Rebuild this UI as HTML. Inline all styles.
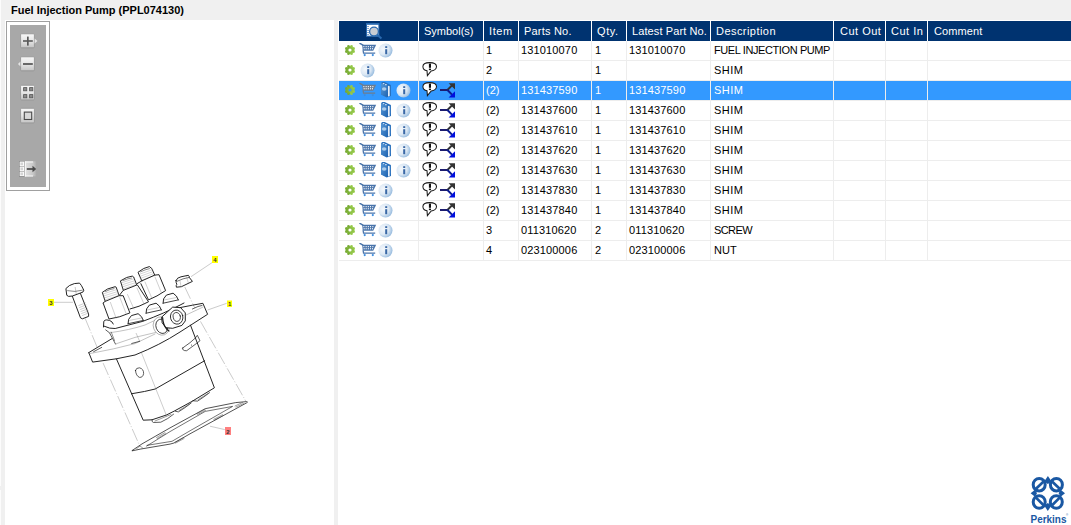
<!DOCTYPE html><html><head><meta charset="utf-8"><style>
*{margin:0;padding:0;box-sizing:border-box}
html,body{width:1071px;height:525px;overflow:hidden;background:#f0f0f0;font-family:"Liberation Sans",sans-serif;position:relative}
.a{position:absolute}
.ic{position:absolute;display:block}
.t{position:absolute;font-size:11px;line-height:13px;white-space:nowrap;color:#000}
.h{position:absolute;font-size:11px;line-height:13px;white-space:nowrap;color:#fff}
</style></head><body>
<svg width="0" height="0" style="position:absolute"><defs><radialGradient id="ig" cx="35%" cy="40%" r="70%"><stop offset="0" stop-color="#f4f8fc"/><stop offset=".55" stop-color="#dce8f4"/><stop offset="1" stop-color="#8fb6dc"/></radialGradient><linearGradient id="gg" x1="0" y1="0" x2="0" y2="1"><stop offset="0" stop-color="#98cc4c"/><stop offset="1" stop-color="#74a830"/></linearGradient><linearGradient id="bk" x1="0" y1="0" x2="1" y2="1"><stop offset="0" stop-color="#5a9ad6"/><stop offset="1" stop-color="#1d62b0"/></linearGradient></defs></svg>
<div class="a" style="left:0;top:0;width:1px;height:525px;background:#fcfcfc"></div>
<div class="a" style="left:0;top:486px;width:1px;height:4px;background:#f0f0f0"></div>
<div class="a" style="left:11px;top:3px;font-size:11px;font-weight:bold;line-height:14px;color:#000">Fuel Injection Pump (PPL074130)</div>
<div class="a" style="left:5px;top:20px;width:329px;height:505px;background:#fff"></div>
<div class="a" style="left:338px;top:20px;width:733px;height:505px;background:#fff"></div>

<div class="a" style="left:6px;top:21px;width:44px;height:170px;border:1px solid #a0a0a0;background:#fff"></div>
<div class="a" style="left:10px;top:25px;width:36px;height:162px;background:#a8a8a8"></div>
<svg class="ic" style="left:0;top:0" width="60" height="200" viewBox="0 0 60 200">
<defs><linearGradient id="bg1" x1="0" y1="0" x2="0" y2="1"><stop offset="0" stop-color="#f8f8f8"/><stop offset=".5" stop-color="#e6e6e6"/><stop offset="1" stop-color="#c4c4c4"/></linearGradient></defs>
<g stroke="#909090" stroke-width=".8" fill="url(#bg1)">
<rect x="20.6" y="33.8" width="13.8" height="14" rx="1"/>
<rect x="20.6" y="56.8" width="13.8" height="14" rx="1"/>
<rect x="20.6" y="85.3" width="13.8" height="14.6" rx="1"/>
<rect x="20.6" y="108.3" width="13.8" height="14.6" rx="1"/>
</g>
<path d="M34.6 38.5 L37.5 41 L34.6 43.5 Z" fill="#e4e4e4"/>
<path d="M20.4 61.5 L18 64 L20.4 66.5 Z" fill="#e4e4e4"/>
<g fill="#5a5a5a">
<rect x="23" y="40.2" width="9.8" height="1.6"/><rect x="27" y="36.6" width="1.7" height="9"/>
<rect x="23" y="63.1" width="9.8" height="1.8"/>
</g>
<g fill="#8a8a8a" stroke="#555" stroke-width=".8">
<rect x="23.6" y="87.6" width="3.2" height="3.2"/><rect x="29.6" y="87.6" width="3.2" height="3.2"/>
<rect x="23.6" y="94.6" width="3.2" height="3.2"/><rect x="29.6" y="94.6" width="3.2" height="3.2"/>
</g>
<rect x="24.3" y="112.1" width="7.4" height="7.4" fill="#d8d8d8" stroke="#4a4a4a" stroke-width="1.1"/>
<rect x="19" y="161" width="5.6" height="15.6" fill="#7a7a7a"/>
<g fill="#d4d4d4" stroke="#fafafa" stroke-width="1">
<rect x="20.1" y="162" width="3.4" height="3.6"/><rect x="20.1" y="167" width="3.4" height="3.6"/><rect x="20.1" y="172" width="3.4" height="3.6"/>
</g>
<defs><linearGradient id="bg2" x1="0" y1="0" x2="1" y2="0"><stop offset="0" stop-color="#e4e4e4"/><stop offset=".7" stop-color="#c8c8c8"/><stop offset="1" stop-color="#a8a8a8"/></linearGradient></defs>
<rect x="24.6" y="161.3" width="12" height="15" fill="url(#bg2)"/>
<path d="M25.3 161.5 V176.5 M25 162 H33 M25 176 H33" stroke="#fafafa" stroke-width="1"/>
<path d="M26.8 169 H33" stroke="#4a4a4a" stroke-width="1.7"/><path d="M32.5 165.8 L36.2 169 L32.5 172.2 Z" fill="#4a4a4a"/>
</svg>

<svg class="ic" style="left:0;top:0" width="335" height="525" viewBox="0 0 335 525">
<g fill="none" stroke="#a8a8a8" stroke-width=".6">
<path d="M54 302.3 H73"/>
<path d="M191 276.7 L212.4 262.4"/>
<path d="M207.6 310 L226.7 303.3"/>
<path d="M210 426.2 L224.8 429.6"/>
<path d="M136 333 L139.5 341 M141.5 352.8 L166.4 415.4" stroke="#9a9a9a" stroke-width=".5"/>
<path d="M85.2 318.5 L97.4 347.9 M103.1 363.1 L140 446.5" stroke-dasharray="13 2 1 2"/>
<path d="M184.8 287 L194.8 308.1 M200.5 321.4 L246 401.5" stroke-dasharray="13 2 1 2"/>
</g>
<g fill="none" stroke="#181818" stroke-width=".95" stroke-linejoin="round" stroke-linecap="round">
<!-- bolt -->
<path d="M66.2 288.3 L69.5 285.5 L74.3 283.6 L79.5 283.1 L81.4 285.5 L83.8 290.2 L82.9 292.1 L72.4 296 L68.6 296.4 L67.1 295.5 Z"/>
<path d="M67.6 290.7 Q75 292.5 82.4 290.2" stroke-width=".5"/>
<path d="M75.2 287.4 L76.2 293.6" stroke-width=".4" stroke="#777"/>
<path d="M72.4 296.4 L80.5 317.9 L82.4 318.8 L88.6 316.4 L88.6 314 L80.5 293.6"/>
<g stroke-width=".4" stroke="#888"><path d="M78.8 305.5 L85.2 303 M79.5 307.5 L86 305 M80.2 309.5 L86.8 307 M80.9 311.5 L87.5 309 M81.6 313.5 L88.2 311 M82.3 315.5 L88.5 313"/></g>
<!-- nut -->
<path d="M176 280.5 Q177 277.5 181 276.8 L188.3 275.3 Q189.5 276 189.2 277.3 L192.4 281.4 L181.4 286.7 L176.4 287.2 Q175.8 285.5 176.8 284.3 Q175.8 282.5 176 280.5 Z"/>
<path d="M177 281.3 Q183 278.3 189.2 277.4" stroke-width=".6"/>
<path d="M186.5 276.8 L188.3 282.6 M180 281 L181 286" stroke-width=".4" stroke="#888"/>
<!-- injector 1 -->
<path d="M105.1 301 L102.3 292.4 L107.5 289 L115.1 286.7 L116.1 287.1 L119 295.2"/>
<path d="M105.5 291.5 Q110 289 114 288.6" stroke-width=".5"/>
<g stroke-width=".35" stroke="#888"><path d="M103 294 L117 289.5 M103.6 296 L117.7 291.5 M104.2 298 L118.3 293.5 M104.8 300 L118.8 295.5"/></g>
<path d="M103.2 302.9 L105.1 301.4 L119 295.7 L123.2 295.7 L129.9 312.9 Q120 317.5 109 319 L103.2 303.3"/>
<path d="M110.4 302.4 L116.1 318.1 M119.9 297.6 L126.6 314.8" stroke-width=".4" stroke="#888"/>
<!-- injector 2 -->
<path d="M123.2 289.9 L120.4 280.9 L126.6 277.5 L132.3 276.1 L133.7 277 L136.6 284.7"/>
<path d="M123 280.5 Q128 278.5 131.5 278" stroke-width=".5"/>
<g stroke-width=".35" stroke="#888"><path d="M121 283 L134.6 278.5 M121.6 285 L135.3 280.5 M122.2 287 L135.9 282.5 M122.8 289 L136.4 284.5"/></g>
<path d="M119.9 294.7 L123.2 290.4 L136.6 285.1 L137.5 285.1 L148.5 301.8 Q139 307 130 309"/>
<path d="M127.5 294.5 L134 309 M137 288 L144 304" stroke-width=".4" stroke="#888"/>
<!-- injector 3 -->
<path d="M141.8 280.9 L138 272.3 L143.7 268.5 L149.4 266.6 L151.8 268.5 L154.7 275.1"/>
<path d="M140.6 271.8 Q145 269.6 149.5 268.6" stroke-width=".5"/>
<g stroke-width=".35" stroke="#888"><path d="M138.8 274.5 L152.7 269.5 M139.5 276.5 L153.4 271.5 M140.2 278.5 L154 273.5 M140.9 280.5 L154.6 275.5"/></g>
<path d="M137 283.7 L141.8 280.9 L154.7 275.1 L159 274.7 L165.6 290.6 Q157 296.5 148.5 299.9 L140.9 283.7"/>
<path d="M145 282 L152 298.5 M155 277 L161.5 293" stroke-width=".4" stroke="#888"/>
<!-- bosses -->
<path d="M103.5 327 L103.8 321.3 Q105 319.8 106.7 319.9 L109.5 320.4 Q112.5 321.5 113.3 324"/>
<path d="M128.1 323.7 L128.6 319.4 L131.4 315.6 L138.1 313.7 L141.4 316.6 L143.3 320.4"/>
<path d="M146.1 313.2 L146.6 308.9 L149.4 305.1 L156.1 303.2 L159.4 306.1 L161.3 309.9"/>
<path d="M163.1 303.2 L163.6 298.9 L166.4 295.1 L173.1 293.2 L176.4 296.1 L178.3 299.9"/>
<path d="M128.1 323.7 L143.3 320.4 M146.1 313.2 L161.3 309.9 M163.1 303.2 L178.3 299.9" stroke-width=".8"/>
<path d="M129 320.5 L142.5 317.8 M147 310 L160.5 307.3 M164 300 L177.5 297.3" stroke-width=".4" stroke="#888"/>
<!-- head plate -->
<path d="M103.8 326.1 Q110 329 115.2 328.5 L142.9 321.3 Q165 313 180 305.1 L184 303"/>
<path d="M105.7 329.9 L109.5 332.8 L115.5 344" stroke-width=".7"/>
<path d="M109.5 332.8 Q130 330 145 325 L162 317" stroke-width=".45" stroke="#777"/>
<path d="M115.5 344 L135 337.4 L156 332.4" stroke-width=".45" stroke="#777"/>
<path d="M111.2 332.1 L114.5 340.5" stroke-width=".5"/>
<!-- fitting -->
<ellipse cx="161.3" cy="326" rx="8" ry="9.3" transform="rotate(-20 161.3 326)" stroke-width=".45" stroke="#666" fill="#fff"/>
<ellipse cx="161.8" cy="326.3" rx="5.8" ry="7.3" transform="rotate(-20 161.8 326.3)" stroke-width=".75"/>
<path d="M161.9 316.9 L172.7 307.1 L180.7 307.7 L185.3 312.9 L185.3 320.9 L181.9 325.4 L172.7 328.3 L165.9 327.7 L162.4 323.1 Z" fill="#fff"/>
<path d="M162.6 317.5 Q163 325 167 329.5 L169 331" stroke-width="1.2"/>
<ellipse cx="176.7" cy="317.1" rx="6.2" ry="7.1" transform="rotate(-15 176.7 317.1)" stroke-width=".8"/>
<ellipse cx="176.8" cy="316.9" rx="3.6" ry="4.5" transform="rotate(-15 176.8 316.9)" stroke-width=".7"/>
<!-- main flange -->
<path d="M88.8 352.6 L111.7 338.8"/>
<path d="M88.8 352.6 L92.6 362.1 L116.4 358.8 L135 355 Q160 345 180 332 L207.6 314.3 L202.9 303.3 L192.4 305.2 L180 307.6"/>
<path d="M89.8 353.6 Q115 349 135 343.6 L155 334" stroke-width=".45" stroke="#777"/>
<path d="M185.7 315.2 L202.9 307.1" stroke-width=".45" stroke="#777"/>
<path d="M93.6 351.7 L101.7 347.4 M131.7 343.5 L139.7 341.3 M192.4 309 L198 306.5 L202 305.5" stroke-width=".7"/>
<!-- body -->
<path d="M116.4 358.8 L143.2 420.2 L152 419.8 L166.4 415 L174.4 411 L192 401.4 L214.4 387.8 L190.5 325.2"/>
<path d="M131.4 393.8 Q146 391.5 155.2 389 L204.7 360.7"/>
<path d="M152 419.8 Q151.8 422.4 153.5 422.5 L160.8 422.2 Q168 419 173.6 414.2 M175.2 411.2 L178.4 411.9 Q185 408 191.2 403 M192.8 400.8 L197.6 401.1 Q204 397 209.6 392.6" stroke-width=".7"/>
<path d="M155 421 L171 414.5 M179 410.5 L189.5 404 M198 399.7 L208 393.5" stroke-width=".5" stroke="#333"/>
<path d="M135.5 370.5 Q136 367.6 139.5 367.8 Q143.8 369 143.6 373.5 Q143 377.6 139.5 377.4 Q136 376 135.5 370.5 Z" stroke-width=".7"/>
<path d="M182.7 348 L190 342.7 L195.3 338 L197.3 335.3 L200 340.7 L196.7 343.3 L186.7 350.7 Q182 351 182.7 348 Z" stroke-width=".7"/>
<circle cx="191.5" cy="345" r=".5" fill="#333" stroke="none"/>
<!-- gasket -->
<path d="M132.3 450.4 L142 443.9 L170 427.9 L205.2 408.7 L235.7 402.6 L246.7 401.6 Q248.3 402 246.7 402.8 L190 433.8 L174 443 L170 444.1 L140.9 449 L132.3 450.8 Z" stroke-width=".75"/>
<path d="M146.6 446.1 L170 431.6 L205.2 411.4 L232.6 406.4 L190 430.8 L172 441.3 L147.1 445.3" stroke-width=".6"/>
<g stroke-width=".5" stroke="#444"><path d="M156.5 437.5 L165 432.6 M157.2 438.6 L165.7 433.7 M197 413.6 L205 409.4 M197.6 414.5 L205.6 410.3 M175 442.2 L183.5 437.6 M175.6 443.1 L184.1 438.5 M213.8 419.3 L222.5 414.7 M214.4 420.2 L223.1 415.6 M235 406 L242.5 402.5 M236 407 L243.5 403.5 M136.5 448.8 L140 446 L142.5 447.8"/></g>
</g>
<g>
<rect x="48" y="299" width="6" height="7" fill="#ffff00"/>
<rect x="212" y="256" width="6" height="7" fill="#ffff00"/>
<rect x="227" y="300.5" width="5" height="6.5" fill="#ffff00"/>
<rect x="225" y="427" width="6" height="8" fill="#ff8080"/>
<g font-family="Liberation Sans" font-size="6" font-weight="bold" fill="#333">
<text x="49.3" y="305">3</text><text x="213.3" y="262">4</text><text x="228" y="306">1</text><text x="226.3" y="434">2</text>
</g>
</g>
</svg>

<svg class="ic" style="left:1020px;top:470px" width="51" height="55" viewBox="1020 470 51 55">
<g fill="none" stroke="#1a58a3" stroke-width="3">
<ellipse cx="1039.2" cy="484.7" rx="6" ry="6.3"/>
<ellipse cx="1056.4" cy="484.7" rx="6" ry="6.3"/>
<ellipse cx="1039.2" cy="502" rx="6" ry="6.3"/>
<ellipse cx="1056.3" cy="502" rx="6" ry="6.3"/>
<path d="M1036 488.8 L1044.4 480.8 M1051.3 480.8 L1059.7 488.8 M1036 497.6 L1044.6 506.2 M1051.1 506.2 L1059.7 497.6" stroke-width="2.7"/>
</g>
<g fill="#1a58a3">
<path d="M1044.2 481.5 L1047.9 476 L1051.6 481.5 L1047.9 484 Z"/>
<path d="M1044.2 505.5 L1047.8 511 L1051.4 505.5 L1047.8 503 Z"/>
<path d="M1035 489.8 L1030.6 493.3 L1035 496.8 L1037 493.3 Z"/>
<path d="M1060.6 489.8 L1065 493.3 L1060.6 496.8 L1058.6 493.3 Z"/>
</g>
<text x="1030.5" y="522.8" font-family="Liberation Sans" font-weight="bold" font-size="11.5" fill="#1a58a3" textLength="36" lengthAdjust="spacingAndGlyphs">Perkins</text>
<text x="1066" y="516" font-family="Liberation Sans" font-size="3" fill="#1a58a3">®</text>
</svg>

<div class="a" style="left:339px;top:21px;width:732px;height:20px;background:#003370"></div>
<div class="a" style="left:418px;top:21px;width:1px;height:20px;background:#fff"></div>
<div class="a" style="left:483px;top:21px;width:1px;height:20px;background:#fff"></div>
<div class="a" style="left:518px;top:21px;width:1px;height:20px;background:#fff"></div>
<div class="a" style="left:591px;top:21px;width:1px;height:20px;background:#fff"></div>
<div class="a" style="left:626px;top:21px;width:1px;height:20px;background:#fff"></div>
<div class="a" style="left:710px;top:21px;width:1px;height:20px;background:#fff"></div>
<div class="a" style="left:833px;top:21px;width:1px;height:20px;background:#fff"></div>
<div class="a" style="left:885px;top:21px;width:1px;height:20px;background:#fff"></div>
<div class="a" style="left:927px;top:21px;width:1px;height:20px;background:#fff"></div>
<div class="h" style="left:424px;top:25px;letter-spacing:0px">Symbol(s)</div>
<div class="h" style="left:489px;top:25px;letter-spacing:0.6px">Item</div>
<div class="h" style="left:524px;top:25px;letter-spacing:0.2px">Parts No.</div>
<div class="h" style="left:597px;top:25px;letter-spacing:0.6px">Qty.</div>
<div class="h" style="left:632px;top:25px;letter-spacing:0.1px">Latest Part No.</div>
<div class="h" style="left:716px;top:25px;letter-spacing:0.45px">Description</div>
<div class="h" style="left:840px;top:25px;letter-spacing:0.5px">Cut Out</div>
<div class="h" style="left:891px;top:25px;letter-spacing:0.5px">Cut In</div>
<div class="h" style="left:934px;top:25px;letter-spacing:0.1px">Comment</div>
<svg class="ic" style="left:365px;top:22px" width="18" height="18" viewBox="0 0 18 18"><rect x="1.5" y="1.6" width="12.4" height="12.6" fill="#fff" stroke="#2a6ab0" stroke-width="1"/><rect x="1.2" y="1.2" width="13" height="1.6" fill="#2a6ab0"/><path d="M2.3 4.5 H3.8 M2.3 6.5 H3.8 M2.3 8.5 H3.8 M2.3 10.5 H3.8 M2.3 12.5 H3.8" stroke="#4a80c0" stroke-width=".9"/><circle cx="9" cy="9.6" r="4.4" fill="#c9cdd3" stroke="#2a6ab0" stroke-width="1.3"/><path d="M12.2 12.8 L16.4 16.6" stroke="#2a6ab0" stroke-width="2"/></svg>
<div class="a" style="left:339px;top:60px;width:732px;height:1px;background:#ededed"></div>
<div class="a" style="left:339px;top:80px;width:732px;height:1px;background:#ededed"></div>
<div class="a" style="left:339px;top:81px;width:732px;height:19px;background:#3399ff"></div>
<div class="a" style="left:339px;top:100px;width:732px;height:1px;background:#ededed"></div>
<div class="a" style="left:339px;top:120px;width:732px;height:1px;background:#ededed"></div>
<div class="a" style="left:339px;top:140px;width:732px;height:1px;background:#ededed"></div>
<div class="a" style="left:339px;top:160px;width:732px;height:1px;background:#ededed"></div>
<div class="a" style="left:339px;top:180px;width:732px;height:1px;background:#ededed"></div>
<div class="a" style="left:339px;top:200px;width:732px;height:1px;background:#ededed"></div>
<div class="a" style="left:339px;top:220px;width:732px;height:1px;background:#ededed"></div>
<div class="a" style="left:339px;top:240px;width:732px;height:1px;background:#ededed"></div>
<div class="a" style="left:339px;top:260px;width:732px;height:1px;background:#ededed"></div>
<div class="a" style="left:418px;top:41px;width:1px;height:220px;background:#ededed"></div>
<div class="a" style="left:483px;top:41px;width:1px;height:220px;background:#ededed"></div>
<div class="a" style="left:518px;top:41px;width:1px;height:220px;background:#ededed"></div>
<div class="a" style="left:591px;top:41px;width:1px;height:220px;background:#ededed"></div>
<div class="a" style="left:626px;top:41px;width:1px;height:220px;background:#ededed"></div>
<div class="a" style="left:710px;top:41px;width:1px;height:220px;background:#ededed"></div>
<div class="a" style="left:833px;top:41px;width:1px;height:220px;background:#ededed"></div>
<div class="a" style="left:885px;top:41px;width:1px;height:220px;background:#ededed"></div>
<div class="a" style="left:927px;top:41px;width:1px;height:220px;background:#ededed"></div>
<svg class="ic" style="left:344px;top:44px" width="12" height="12" viewBox="0 0 12 12"><defs></defs><g transform="translate(6 6) rotate(22.5)" fill="url(#gg)"><circle r="3.7"/><rect x="-1.25" y="-5.1" width="2.5" height="10.2" rx=".5"/><rect x="-1.25" y="-5.1" width="2.5" height="10.2" rx=".5" transform="rotate(45)"/><rect x="-1.25" y="-5.1" width="2.5" height="10.2" rx=".5" transform="rotate(90)"/><rect x="-1.25" y="-5.1" width="2.5" height="10.2" rx=".5" transform="rotate(135)"/></g><circle cx="6" cy="6" r="1.6" fill="#fff"/></svg>
<svg class="ic" style="left:359px;top:43px" width="18" height="15" viewBox="0 0 18 15"><path d="M1 0.4 L3.9 2.2" stroke="#4a74aa" stroke-width="1.5" stroke-linecap="round"/><path d="M3.2 1.7 L17.2 1.7 L14.2 7.8 L3.7 7.8 Z" fill="#4a74aa"/><path d="M4.1 7.5 L4.6 10.4 M3.9 10.2 L16.2 10.2" stroke="#4a74aa" stroke-width="1.3"/><g fill="#fff"><rect x="4.3" y="3.1" width="1.1" height="1.1"/><rect x="6.6" y="3.1" width="1.1" height="1.1"/><rect x="8.8" y="3.1" width="1.1" height="1.1"/><rect x="11" y="3.1" width="1.1" height="1.1"/><rect x="13.3" y="3.1" width="1.1" height="1.1"/><rect x="4.6" y="5.2" width="1.1" height="1.1"/><rect x="6.6" y="5.2" width="1.1" height="1.1"/><rect x="8.8" y="5.2" width="1.1" height="1.1"/><rect x="11" y="5.2" width="1.1" height="1.1"/><rect x="13" y="5.2" width="1" height="1.1"/></g><g fill="#3d8ee0"><circle cx="5.7" cy="12.1" r="1.1"/><circle cx="13.8" cy="12.1" r="1.1"/></g></svg>
<svg class="ic" style="left:378px;top:43px" width="15" height="15" viewBox="0 0 15 15"><defs></defs><circle cx="7.5" cy="7.5" r="7" fill="url(#ig)"/><rect x="7.2" y="3.2" width="2" height="1.8" fill="#3a68a6"/><rect x="7.2" y="6.2" width="2" height="5" fill="#3a68a6"/></svg>
<div class="t" style="left:486px;top:44px;color:#000;letter-spacing:0px">1</div>
<div class="t" style="left:521px;top:44px;color:#000;letter-spacing:0.15px">131010070</div>
<div class="t" style="left:595px;top:44px;color:#000;letter-spacing:0px">1</div>
<div class="t" style="left:629px;top:44px;color:#000;letter-spacing:0.15px">131010070</div>
<div class="t" style="left:714px;top:44px;color:#000;letter-spacing:-0.4px">FUEL INJECTION PUMP</div>
<svg class="ic" style="left:344px;top:64px" width="12" height="12" viewBox="0 0 12 12"><defs></defs><g transform="translate(6 6) rotate(22.5)" fill="url(#gg)"><circle r="3.7"/><rect x="-1.25" y="-5.1" width="2.5" height="10.2" rx=".5"/><rect x="-1.25" y="-5.1" width="2.5" height="10.2" rx=".5" transform="rotate(45)"/><rect x="-1.25" y="-5.1" width="2.5" height="10.2" rx=".5" transform="rotate(90)"/><rect x="-1.25" y="-5.1" width="2.5" height="10.2" rx=".5" transform="rotate(135)"/></g><circle cx="6" cy="6" r="1.6" fill="#fff"/></svg>
<svg class="ic" style="left:360px;top:63px" width="15" height="15" viewBox="0 0 15 15"><defs></defs><circle cx="7.5" cy="7.5" r="7" fill="url(#ig)"/><rect x="7.2" y="3.2" width="2" height="1.8" fill="#3a68a6"/><rect x="7.2" y="6.2" width="2" height="5" fill="#3a68a6"/></svg>
<svg class="ic" style="left:422px;top:61px" width="16" height="17" viewBox="0 0 16 17"><path d="M5 9.8 C2 9.3 0.9 7.6 0.9 5.6 C0.9 3 3.6 1.6 7.6 1.6 C11.6 1.6 14.5 3 14.5 5.6 C14.5 8.1 11.8 9.7 9.2 9.9 L5.4 14.6 Z" fill="#fff" stroke="#1a1a1a" stroke-width="1.05"/><rect x="6.9" y="2.6" width="2.1" height="4.2" fill="#111"/><rect x="6.9" y="7.6" width="2.1" height="1.5" fill="#111"/></svg>
<div class="t" style="left:486px;top:64px;color:#000;letter-spacing:0px">2</div>
<div class="t" style="left:595px;top:64px;color:#000;letter-spacing:0px">1</div>
<div class="t" style="left:714px;top:64px;color:#000;letter-spacing:0.45px">SHIM</div>
<svg class="ic" style="left:344px;top:84px" width="12" height="12" viewBox="0 0 12 12"><defs></defs><g transform="translate(6 6) rotate(22.5)" fill="url(#gg)"><circle r="3.7"/><rect x="-1.25" y="-5.1" width="2.5" height="10.2" rx=".5"/><rect x="-1.25" y="-5.1" width="2.5" height="10.2" rx=".5" transform="rotate(45)"/><rect x="-1.25" y="-5.1" width="2.5" height="10.2" rx=".5" transform="rotate(90)"/><rect x="-1.25" y="-5.1" width="2.5" height="10.2" rx=".5" transform="rotate(135)"/></g><circle cx="6" cy="6" r="1.6" fill="#3399ff"/></svg>
<svg class="ic" style="left:359px;top:83px" width="18" height="15" viewBox="0 0 18 15"><path d="M1 0.4 L3.9 2.2" stroke="#6d7d90" stroke-width="1.5" stroke-linecap="round"/><path d="M3.2 1.7 L17.2 1.7 L14.2 7.8 L3.7 7.8 Z" fill="#6d7d90"/><path d="M4.1 7.5 L4.6 10.4 M3.9 10.2 L16.2 10.2" stroke="#6d7d90" stroke-width="1.3"/><g fill="#fff"><rect x="4.3" y="3.1" width="1.1" height="1.1"/><rect x="6.6" y="3.1" width="1.1" height="1.1"/><rect x="8.8" y="3.1" width="1.1" height="1.1"/><rect x="11" y="3.1" width="1.1" height="1.1"/><rect x="13.3" y="3.1" width="1.1" height="1.1"/><rect x="4.6" y="5.2" width="1.1" height="1.1"/><rect x="6.6" y="5.2" width="1.1" height="1.1"/><rect x="8.8" y="5.2" width="1.1" height="1.1"/><rect x="11" y="5.2" width="1.1" height="1.1"/><rect x="13" y="5.2" width="1" height="1.1"/></g><g fill="#3d8ee0"><circle cx="5.7" cy="12.1" r="1.1"/><circle cx="13.8" cy="12.1" r="1.1"/></g></svg>
<svg class="ic" style="left:380px;top:81px" width="12" height="18" viewBox="0 0 12 18"><path d="M1.1 2 L2.4 0.9 L4.7 0.9 L10.9 4 L11 15 L6.6 16.6 L1.1 13.6 Z" fill="#2870bd"/><path d="M1.1 2.2 L8 5 L8 16 L1.1 13.4 Z" fill="url(#bk)"/><path d="M8.1 4.8 L9.6 5.3 L9.6 15.1 L8.1 15.5 Z" fill="#fff"/><ellipse cx="4.2" cy="8" rx="2.3" ry="1.7" fill="#d0e4f6" opacity=".75"/><ellipse cx="3.6" cy="2.6" rx="1" ry=".6" fill="#e8f2fc" opacity=".9"/><ellipse cx="5.9" cy="3.7" rx="1" ry=".6" fill="#e8f2fc" opacity=".9"/></svg>
<svg class="ic" style="left:396px;top:83px" width="15" height="15" viewBox="0 0 15 15"><defs></defs><circle cx="7.5" cy="7.5" r="7" fill="url(#ig)"/><rect x="7.2" y="3.2" width="2" height="1.8" fill="#3a68a6"/><rect x="7.2" y="6.2" width="2" height="5" fill="#3a68a6"/></svg>
<svg class="ic" style="left:422px;top:81px" width="16" height="17" viewBox="0 0 16 17"><path d="M5 9.8 C2 9.3 0.9 7.6 0.9 5.6 C0.9 3 3.6 1.6 7.6 1.6 C11.6 1.6 14.5 3 14.5 5.6 C14.5 8.1 11.8 9.7 9.2 9.9 L5.4 14.6 Z" fill="#fff" stroke="#1a1a1a" stroke-width="1.05"/><rect x="6.9" y="2.6" width="2.1" height="4.2" fill="#111"/><rect x="6.9" y="7.6" width="2.1" height="1.5" fill="#111"/></svg>
<svg class="ic" style="left:439px;top:83px" width="17" height="16" viewBox="0 0 17 16"><path d="M1 7 L8.8 7" stroke="#1c1c70" stroke-width="2"/><path d="M8.2 7.2 L13 2.4" stroke="#333" stroke-width="2"/><path d="M8.2 6.8 L13 11.6" stroke="#0a1a90" stroke-width="2"/><path d="M9.6 0.2 L16 0.2 L16 6.6 Z" fill="#333"/><path d="M9.6 14.6 L16 14.6 L16 8.2 Z" fill="#0010dd"/></svg>
<div class="t" style="left:486px;top:84px;color:#fff;letter-spacing:0px">(2)</div>
<div class="t" style="left:521px;top:84px;color:#fff;letter-spacing:0.15px">131437590</div>
<div class="t" style="left:595px;top:84px;color:#fff;letter-spacing:0px">1</div>
<div class="t" style="left:629px;top:84px;color:#fff;letter-spacing:0.15px">131437590</div>
<div class="t" style="left:714px;top:84px;color:#fff;letter-spacing:0.45px">SHIM</div>
<svg class="ic" style="left:344px;top:104px" width="12" height="12" viewBox="0 0 12 12"><defs></defs><g transform="translate(6 6) rotate(22.5)" fill="url(#gg)"><circle r="3.7"/><rect x="-1.25" y="-5.1" width="2.5" height="10.2" rx=".5"/><rect x="-1.25" y="-5.1" width="2.5" height="10.2" rx=".5" transform="rotate(45)"/><rect x="-1.25" y="-5.1" width="2.5" height="10.2" rx=".5" transform="rotate(90)"/><rect x="-1.25" y="-5.1" width="2.5" height="10.2" rx=".5" transform="rotate(135)"/></g><circle cx="6" cy="6" r="1.6" fill="#fff"/></svg>
<svg class="ic" style="left:359px;top:103px" width="18" height="15" viewBox="0 0 18 15"><path d="M1 0.4 L3.9 2.2" stroke="#4a74aa" stroke-width="1.5" stroke-linecap="round"/><path d="M3.2 1.7 L17.2 1.7 L14.2 7.8 L3.7 7.8 Z" fill="#4a74aa"/><path d="M4.1 7.5 L4.6 10.4 M3.9 10.2 L16.2 10.2" stroke="#4a74aa" stroke-width="1.3"/><g fill="#fff"><rect x="4.3" y="3.1" width="1.1" height="1.1"/><rect x="6.6" y="3.1" width="1.1" height="1.1"/><rect x="8.8" y="3.1" width="1.1" height="1.1"/><rect x="11" y="3.1" width="1.1" height="1.1"/><rect x="13.3" y="3.1" width="1.1" height="1.1"/><rect x="4.6" y="5.2" width="1.1" height="1.1"/><rect x="6.6" y="5.2" width="1.1" height="1.1"/><rect x="8.8" y="5.2" width="1.1" height="1.1"/><rect x="11" y="5.2" width="1.1" height="1.1"/><rect x="13" y="5.2" width="1" height="1.1"/></g><g fill="#3d8ee0"><circle cx="5.7" cy="12.1" r="1.1"/><circle cx="13.8" cy="12.1" r="1.1"/></g></svg>
<svg class="ic" style="left:380px;top:101px" width="12" height="18" viewBox="0 0 12 18"><path d="M1.1 2 L2.4 0.9 L4.7 0.9 L10.9 4 L11 15 L6.6 16.6 L1.1 13.6 Z" fill="#2870bd"/><path d="M1.1 2.2 L8 5 L8 16 L1.1 13.4 Z" fill="url(#bk)"/><path d="M8.1 4.8 L9.6 5.3 L9.6 15.1 L8.1 15.5 Z" fill="#fff"/><ellipse cx="4.2" cy="8" rx="2.3" ry="1.7" fill="#d0e4f6" opacity=".75"/><ellipse cx="3.6" cy="2.6" rx="1" ry=".6" fill="#e8f2fc" opacity=".9"/><ellipse cx="5.9" cy="3.7" rx="1" ry=".6" fill="#e8f2fc" opacity=".9"/></svg>
<svg class="ic" style="left:396px;top:103px" width="15" height="15" viewBox="0 0 15 15"><defs></defs><circle cx="7.5" cy="7.5" r="7" fill="url(#ig)"/><rect x="7.2" y="3.2" width="2" height="1.8" fill="#3a68a6"/><rect x="7.2" y="6.2" width="2" height="5" fill="#3a68a6"/></svg>
<svg class="ic" style="left:422px;top:101px" width="16" height="17" viewBox="0 0 16 17"><path d="M5 9.8 C2 9.3 0.9 7.6 0.9 5.6 C0.9 3 3.6 1.6 7.6 1.6 C11.6 1.6 14.5 3 14.5 5.6 C14.5 8.1 11.8 9.7 9.2 9.9 L5.4 14.6 Z" fill="#fff" stroke="#1a1a1a" stroke-width="1.05"/><rect x="6.9" y="2.6" width="2.1" height="4.2" fill="#111"/><rect x="6.9" y="7.6" width="2.1" height="1.5" fill="#111"/></svg>
<svg class="ic" style="left:439px;top:103px" width="17" height="16" viewBox="0 0 17 16"><path d="M1 7 L8.8 7" stroke="#1c1c70" stroke-width="2"/><path d="M8.2 7.2 L13 2.4" stroke="#333" stroke-width="2"/><path d="M8.2 6.8 L13 11.6" stroke="#0a1a90" stroke-width="2"/><path d="M9.6 0.2 L16 0.2 L16 6.6 Z" fill="#333"/><path d="M9.6 14.6 L16 14.6 L16 8.2 Z" fill="#0010dd"/></svg>
<div class="t" style="left:486px;top:104px;color:#000;letter-spacing:0px">(2)</div>
<div class="t" style="left:521px;top:104px;color:#000;letter-spacing:0.15px">131437600</div>
<div class="t" style="left:595px;top:104px;color:#000;letter-spacing:0px">1</div>
<div class="t" style="left:629px;top:104px;color:#000;letter-spacing:0.15px">131437600</div>
<div class="t" style="left:714px;top:104px;color:#000;letter-spacing:0.45px">SHIM</div>
<svg class="ic" style="left:344px;top:124px" width="12" height="12" viewBox="0 0 12 12"><defs></defs><g transform="translate(6 6) rotate(22.5)" fill="url(#gg)"><circle r="3.7"/><rect x="-1.25" y="-5.1" width="2.5" height="10.2" rx=".5"/><rect x="-1.25" y="-5.1" width="2.5" height="10.2" rx=".5" transform="rotate(45)"/><rect x="-1.25" y="-5.1" width="2.5" height="10.2" rx=".5" transform="rotate(90)"/><rect x="-1.25" y="-5.1" width="2.5" height="10.2" rx=".5" transform="rotate(135)"/></g><circle cx="6" cy="6" r="1.6" fill="#fff"/></svg>
<svg class="ic" style="left:359px;top:123px" width="18" height="15" viewBox="0 0 18 15"><path d="M1 0.4 L3.9 2.2" stroke="#4a74aa" stroke-width="1.5" stroke-linecap="round"/><path d="M3.2 1.7 L17.2 1.7 L14.2 7.8 L3.7 7.8 Z" fill="#4a74aa"/><path d="M4.1 7.5 L4.6 10.4 M3.9 10.2 L16.2 10.2" stroke="#4a74aa" stroke-width="1.3"/><g fill="#fff"><rect x="4.3" y="3.1" width="1.1" height="1.1"/><rect x="6.6" y="3.1" width="1.1" height="1.1"/><rect x="8.8" y="3.1" width="1.1" height="1.1"/><rect x="11" y="3.1" width="1.1" height="1.1"/><rect x="13.3" y="3.1" width="1.1" height="1.1"/><rect x="4.6" y="5.2" width="1.1" height="1.1"/><rect x="6.6" y="5.2" width="1.1" height="1.1"/><rect x="8.8" y="5.2" width="1.1" height="1.1"/><rect x="11" y="5.2" width="1.1" height="1.1"/><rect x="13" y="5.2" width="1" height="1.1"/></g><g fill="#3d8ee0"><circle cx="5.7" cy="12.1" r="1.1"/><circle cx="13.8" cy="12.1" r="1.1"/></g></svg>
<svg class="ic" style="left:380px;top:121px" width="12" height="18" viewBox="0 0 12 18"><path d="M1.1 2 L2.4 0.9 L4.7 0.9 L10.9 4 L11 15 L6.6 16.6 L1.1 13.6 Z" fill="#2870bd"/><path d="M1.1 2.2 L8 5 L8 16 L1.1 13.4 Z" fill="url(#bk)"/><path d="M8.1 4.8 L9.6 5.3 L9.6 15.1 L8.1 15.5 Z" fill="#fff"/><ellipse cx="4.2" cy="8" rx="2.3" ry="1.7" fill="#d0e4f6" opacity=".75"/><ellipse cx="3.6" cy="2.6" rx="1" ry=".6" fill="#e8f2fc" opacity=".9"/><ellipse cx="5.9" cy="3.7" rx="1" ry=".6" fill="#e8f2fc" opacity=".9"/></svg>
<svg class="ic" style="left:396px;top:123px" width="15" height="15" viewBox="0 0 15 15"><defs></defs><circle cx="7.5" cy="7.5" r="7" fill="url(#ig)"/><rect x="7.2" y="3.2" width="2" height="1.8" fill="#3a68a6"/><rect x="7.2" y="6.2" width="2" height="5" fill="#3a68a6"/></svg>
<svg class="ic" style="left:422px;top:121px" width="16" height="17" viewBox="0 0 16 17"><path d="M5 9.8 C2 9.3 0.9 7.6 0.9 5.6 C0.9 3 3.6 1.6 7.6 1.6 C11.6 1.6 14.5 3 14.5 5.6 C14.5 8.1 11.8 9.7 9.2 9.9 L5.4 14.6 Z" fill="#fff" stroke="#1a1a1a" stroke-width="1.05"/><rect x="6.9" y="2.6" width="2.1" height="4.2" fill="#111"/><rect x="6.9" y="7.6" width="2.1" height="1.5" fill="#111"/></svg>
<svg class="ic" style="left:439px;top:123px" width="17" height="16" viewBox="0 0 17 16"><path d="M1 7 L8.8 7" stroke="#1c1c70" stroke-width="2"/><path d="M8.2 7.2 L13 2.4" stroke="#333" stroke-width="2"/><path d="M8.2 6.8 L13 11.6" stroke="#0a1a90" stroke-width="2"/><path d="M9.6 0.2 L16 0.2 L16 6.6 Z" fill="#333"/><path d="M9.6 14.6 L16 14.6 L16 8.2 Z" fill="#0010dd"/></svg>
<div class="t" style="left:486px;top:124px;color:#000;letter-spacing:0px">(2)</div>
<div class="t" style="left:521px;top:124px;color:#000;letter-spacing:0.15px">131437610</div>
<div class="t" style="left:595px;top:124px;color:#000;letter-spacing:0px">1</div>
<div class="t" style="left:629px;top:124px;color:#000;letter-spacing:0.15px">131437610</div>
<div class="t" style="left:714px;top:124px;color:#000;letter-spacing:0.45px">SHIM</div>
<svg class="ic" style="left:344px;top:144px" width="12" height="12" viewBox="0 0 12 12"><defs></defs><g transform="translate(6 6) rotate(22.5)" fill="url(#gg)"><circle r="3.7"/><rect x="-1.25" y="-5.1" width="2.5" height="10.2" rx=".5"/><rect x="-1.25" y="-5.1" width="2.5" height="10.2" rx=".5" transform="rotate(45)"/><rect x="-1.25" y="-5.1" width="2.5" height="10.2" rx=".5" transform="rotate(90)"/><rect x="-1.25" y="-5.1" width="2.5" height="10.2" rx=".5" transform="rotate(135)"/></g><circle cx="6" cy="6" r="1.6" fill="#fff"/></svg>
<svg class="ic" style="left:359px;top:143px" width="18" height="15" viewBox="0 0 18 15"><path d="M1 0.4 L3.9 2.2" stroke="#4a74aa" stroke-width="1.5" stroke-linecap="round"/><path d="M3.2 1.7 L17.2 1.7 L14.2 7.8 L3.7 7.8 Z" fill="#4a74aa"/><path d="M4.1 7.5 L4.6 10.4 M3.9 10.2 L16.2 10.2" stroke="#4a74aa" stroke-width="1.3"/><g fill="#fff"><rect x="4.3" y="3.1" width="1.1" height="1.1"/><rect x="6.6" y="3.1" width="1.1" height="1.1"/><rect x="8.8" y="3.1" width="1.1" height="1.1"/><rect x="11" y="3.1" width="1.1" height="1.1"/><rect x="13.3" y="3.1" width="1.1" height="1.1"/><rect x="4.6" y="5.2" width="1.1" height="1.1"/><rect x="6.6" y="5.2" width="1.1" height="1.1"/><rect x="8.8" y="5.2" width="1.1" height="1.1"/><rect x="11" y="5.2" width="1.1" height="1.1"/><rect x="13" y="5.2" width="1" height="1.1"/></g><g fill="#3d8ee0"><circle cx="5.7" cy="12.1" r="1.1"/><circle cx="13.8" cy="12.1" r="1.1"/></g></svg>
<svg class="ic" style="left:380px;top:141px" width="12" height="18" viewBox="0 0 12 18"><path d="M1.1 2 L2.4 0.9 L4.7 0.9 L10.9 4 L11 15 L6.6 16.6 L1.1 13.6 Z" fill="#2870bd"/><path d="M1.1 2.2 L8 5 L8 16 L1.1 13.4 Z" fill="url(#bk)"/><path d="M8.1 4.8 L9.6 5.3 L9.6 15.1 L8.1 15.5 Z" fill="#fff"/><ellipse cx="4.2" cy="8" rx="2.3" ry="1.7" fill="#d0e4f6" opacity=".75"/><ellipse cx="3.6" cy="2.6" rx="1" ry=".6" fill="#e8f2fc" opacity=".9"/><ellipse cx="5.9" cy="3.7" rx="1" ry=".6" fill="#e8f2fc" opacity=".9"/></svg>
<svg class="ic" style="left:396px;top:143px" width="15" height="15" viewBox="0 0 15 15"><defs></defs><circle cx="7.5" cy="7.5" r="7" fill="url(#ig)"/><rect x="7.2" y="3.2" width="2" height="1.8" fill="#3a68a6"/><rect x="7.2" y="6.2" width="2" height="5" fill="#3a68a6"/></svg>
<svg class="ic" style="left:422px;top:141px" width="16" height="17" viewBox="0 0 16 17"><path d="M5 9.8 C2 9.3 0.9 7.6 0.9 5.6 C0.9 3 3.6 1.6 7.6 1.6 C11.6 1.6 14.5 3 14.5 5.6 C14.5 8.1 11.8 9.7 9.2 9.9 L5.4 14.6 Z" fill="#fff" stroke="#1a1a1a" stroke-width="1.05"/><rect x="6.9" y="2.6" width="2.1" height="4.2" fill="#111"/><rect x="6.9" y="7.6" width="2.1" height="1.5" fill="#111"/></svg>
<svg class="ic" style="left:439px;top:143px" width="17" height="16" viewBox="0 0 17 16"><path d="M1 7 L8.8 7" stroke="#1c1c70" stroke-width="2"/><path d="M8.2 7.2 L13 2.4" stroke="#333" stroke-width="2"/><path d="M8.2 6.8 L13 11.6" stroke="#0a1a90" stroke-width="2"/><path d="M9.6 0.2 L16 0.2 L16 6.6 Z" fill="#333"/><path d="M9.6 14.6 L16 14.6 L16 8.2 Z" fill="#0010dd"/></svg>
<div class="t" style="left:486px;top:144px;color:#000;letter-spacing:0px">(2)</div>
<div class="t" style="left:521px;top:144px;color:#000;letter-spacing:0.15px">131437620</div>
<div class="t" style="left:595px;top:144px;color:#000;letter-spacing:0px">1</div>
<div class="t" style="left:629px;top:144px;color:#000;letter-spacing:0.15px">131437620</div>
<div class="t" style="left:714px;top:144px;color:#000;letter-spacing:0.45px">SHIM</div>
<svg class="ic" style="left:344px;top:164px" width="12" height="12" viewBox="0 0 12 12"><defs></defs><g transform="translate(6 6) rotate(22.5)" fill="url(#gg)"><circle r="3.7"/><rect x="-1.25" y="-5.1" width="2.5" height="10.2" rx=".5"/><rect x="-1.25" y="-5.1" width="2.5" height="10.2" rx=".5" transform="rotate(45)"/><rect x="-1.25" y="-5.1" width="2.5" height="10.2" rx=".5" transform="rotate(90)"/><rect x="-1.25" y="-5.1" width="2.5" height="10.2" rx=".5" transform="rotate(135)"/></g><circle cx="6" cy="6" r="1.6" fill="#fff"/></svg>
<svg class="ic" style="left:359px;top:163px" width="18" height="15" viewBox="0 0 18 15"><path d="M1 0.4 L3.9 2.2" stroke="#4a74aa" stroke-width="1.5" stroke-linecap="round"/><path d="M3.2 1.7 L17.2 1.7 L14.2 7.8 L3.7 7.8 Z" fill="#4a74aa"/><path d="M4.1 7.5 L4.6 10.4 M3.9 10.2 L16.2 10.2" stroke="#4a74aa" stroke-width="1.3"/><g fill="#fff"><rect x="4.3" y="3.1" width="1.1" height="1.1"/><rect x="6.6" y="3.1" width="1.1" height="1.1"/><rect x="8.8" y="3.1" width="1.1" height="1.1"/><rect x="11" y="3.1" width="1.1" height="1.1"/><rect x="13.3" y="3.1" width="1.1" height="1.1"/><rect x="4.6" y="5.2" width="1.1" height="1.1"/><rect x="6.6" y="5.2" width="1.1" height="1.1"/><rect x="8.8" y="5.2" width="1.1" height="1.1"/><rect x="11" y="5.2" width="1.1" height="1.1"/><rect x="13" y="5.2" width="1" height="1.1"/></g><g fill="#3d8ee0"><circle cx="5.7" cy="12.1" r="1.1"/><circle cx="13.8" cy="12.1" r="1.1"/></g></svg>
<svg class="ic" style="left:380px;top:161px" width="12" height="18" viewBox="0 0 12 18"><path d="M1.1 2 L2.4 0.9 L4.7 0.9 L10.9 4 L11 15 L6.6 16.6 L1.1 13.6 Z" fill="#2870bd"/><path d="M1.1 2.2 L8 5 L8 16 L1.1 13.4 Z" fill="url(#bk)"/><path d="M8.1 4.8 L9.6 5.3 L9.6 15.1 L8.1 15.5 Z" fill="#fff"/><ellipse cx="4.2" cy="8" rx="2.3" ry="1.7" fill="#d0e4f6" opacity=".75"/><ellipse cx="3.6" cy="2.6" rx="1" ry=".6" fill="#e8f2fc" opacity=".9"/><ellipse cx="5.9" cy="3.7" rx="1" ry=".6" fill="#e8f2fc" opacity=".9"/></svg>
<svg class="ic" style="left:396px;top:163px" width="15" height="15" viewBox="0 0 15 15"><defs></defs><circle cx="7.5" cy="7.5" r="7" fill="url(#ig)"/><rect x="7.2" y="3.2" width="2" height="1.8" fill="#3a68a6"/><rect x="7.2" y="6.2" width="2" height="5" fill="#3a68a6"/></svg>
<svg class="ic" style="left:422px;top:161px" width="16" height="17" viewBox="0 0 16 17"><path d="M5 9.8 C2 9.3 0.9 7.6 0.9 5.6 C0.9 3 3.6 1.6 7.6 1.6 C11.6 1.6 14.5 3 14.5 5.6 C14.5 8.1 11.8 9.7 9.2 9.9 L5.4 14.6 Z" fill="#fff" stroke="#1a1a1a" stroke-width="1.05"/><rect x="6.9" y="2.6" width="2.1" height="4.2" fill="#111"/><rect x="6.9" y="7.6" width="2.1" height="1.5" fill="#111"/></svg>
<svg class="ic" style="left:439px;top:163px" width="17" height="16" viewBox="0 0 17 16"><path d="M1 7 L8.8 7" stroke="#1c1c70" stroke-width="2"/><path d="M8.2 7.2 L13 2.4" stroke="#333" stroke-width="2"/><path d="M8.2 6.8 L13 11.6" stroke="#0a1a90" stroke-width="2"/><path d="M9.6 0.2 L16 0.2 L16 6.6 Z" fill="#333"/><path d="M9.6 14.6 L16 14.6 L16 8.2 Z" fill="#0010dd"/></svg>
<div class="t" style="left:486px;top:164px;color:#000;letter-spacing:0px">(2)</div>
<div class="t" style="left:521px;top:164px;color:#000;letter-spacing:0.15px">131437630</div>
<div class="t" style="left:595px;top:164px;color:#000;letter-spacing:0px">1</div>
<div class="t" style="left:629px;top:164px;color:#000;letter-spacing:0.15px">131437630</div>
<div class="t" style="left:714px;top:164px;color:#000;letter-spacing:0.45px">SHIM</div>
<svg class="ic" style="left:344px;top:184px" width="12" height="12" viewBox="0 0 12 12"><defs></defs><g transform="translate(6 6) rotate(22.5)" fill="url(#gg)"><circle r="3.7"/><rect x="-1.25" y="-5.1" width="2.5" height="10.2" rx=".5"/><rect x="-1.25" y="-5.1" width="2.5" height="10.2" rx=".5" transform="rotate(45)"/><rect x="-1.25" y="-5.1" width="2.5" height="10.2" rx=".5" transform="rotate(90)"/><rect x="-1.25" y="-5.1" width="2.5" height="10.2" rx=".5" transform="rotate(135)"/></g><circle cx="6" cy="6" r="1.6" fill="#fff"/></svg>
<svg class="ic" style="left:359px;top:183px" width="18" height="15" viewBox="0 0 18 15"><path d="M1 0.4 L3.9 2.2" stroke="#4a74aa" stroke-width="1.5" stroke-linecap="round"/><path d="M3.2 1.7 L17.2 1.7 L14.2 7.8 L3.7 7.8 Z" fill="#4a74aa"/><path d="M4.1 7.5 L4.6 10.4 M3.9 10.2 L16.2 10.2" stroke="#4a74aa" stroke-width="1.3"/><g fill="#fff"><rect x="4.3" y="3.1" width="1.1" height="1.1"/><rect x="6.6" y="3.1" width="1.1" height="1.1"/><rect x="8.8" y="3.1" width="1.1" height="1.1"/><rect x="11" y="3.1" width="1.1" height="1.1"/><rect x="13.3" y="3.1" width="1.1" height="1.1"/><rect x="4.6" y="5.2" width="1.1" height="1.1"/><rect x="6.6" y="5.2" width="1.1" height="1.1"/><rect x="8.8" y="5.2" width="1.1" height="1.1"/><rect x="11" y="5.2" width="1.1" height="1.1"/><rect x="13" y="5.2" width="1" height="1.1"/></g><g fill="#3d8ee0"><circle cx="5.7" cy="12.1" r="1.1"/><circle cx="13.8" cy="12.1" r="1.1"/></g></svg>
<svg class="ic" style="left:378px;top:183px" width="15" height="15" viewBox="0 0 15 15"><defs></defs><circle cx="7.5" cy="7.5" r="7" fill="url(#ig)"/><rect x="7.2" y="3.2" width="2" height="1.8" fill="#3a68a6"/><rect x="7.2" y="6.2" width="2" height="5" fill="#3a68a6"/></svg>
<svg class="ic" style="left:422px;top:181px" width="16" height="17" viewBox="0 0 16 17"><path d="M5 9.8 C2 9.3 0.9 7.6 0.9 5.6 C0.9 3 3.6 1.6 7.6 1.6 C11.6 1.6 14.5 3 14.5 5.6 C14.5 8.1 11.8 9.7 9.2 9.9 L5.4 14.6 Z" fill="#fff" stroke="#1a1a1a" stroke-width="1.05"/><rect x="6.9" y="2.6" width="2.1" height="4.2" fill="#111"/><rect x="6.9" y="7.6" width="2.1" height="1.5" fill="#111"/></svg>
<svg class="ic" style="left:439px;top:183px" width="17" height="16" viewBox="0 0 17 16"><path d="M1 7 L8.8 7" stroke="#1c1c70" stroke-width="2"/><path d="M8.2 7.2 L13 2.4" stroke="#333" stroke-width="2"/><path d="M8.2 6.8 L13 11.6" stroke="#0a1a90" stroke-width="2"/><path d="M9.6 0.2 L16 0.2 L16 6.6 Z" fill="#333"/><path d="M9.6 14.6 L16 14.6 L16 8.2 Z" fill="#0010dd"/></svg>
<div class="t" style="left:486px;top:184px;color:#000;letter-spacing:0px">(2)</div>
<div class="t" style="left:521px;top:184px;color:#000;letter-spacing:0.15px">131437830</div>
<div class="t" style="left:595px;top:184px;color:#000;letter-spacing:0px">1</div>
<div class="t" style="left:629px;top:184px;color:#000;letter-spacing:0.15px">131437830</div>
<div class="t" style="left:714px;top:184px;color:#000;letter-spacing:0.45px">SHIM</div>
<svg class="ic" style="left:344px;top:204px" width="12" height="12" viewBox="0 0 12 12"><defs></defs><g transform="translate(6 6) rotate(22.5)" fill="url(#gg)"><circle r="3.7"/><rect x="-1.25" y="-5.1" width="2.5" height="10.2" rx=".5"/><rect x="-1.25" y="-5.1" width="2.5" height="10.2" rx=".5" transform="rotate(45)"/><rect x="-1.25" y="-5.1" width="2.5" height="10.2" rx=".5" transform="rotate(90)"/><rect x="-1.25" y="-5.1" width="2.5" height="10.2" rx=".5" transform="rotate(135)"/></g><circle cx="6" cy="6" r="1.6" fill="#fff"/></svg>
<svg class="ic" style="left:359px;top:203px" width="18" height="15" viewBox="0 0 18 15"><path d="M1 0.4 L3.9 2.2" stroke="#4a74aa" stroke-width="1.5" stroke-linecap="round"/><path d="M3.2 1.7 L17.2 1.7 L14.2 7.8 L3.7 7.8 Z" fill="#4a74aa"/><path d="M4.1 7.5 L4.6 10.4 M3.9 10.2 L16.2 10.2" stroke="#4a74aa" stroke-width="1.3"/><g fill="#fff"><rect x="4.3" y="3.1" width="1.1" height="1.1"/><rect x="6.6" y="3.1" width="1.1" height="1.1"/><rect x="8.8" y="3.1" width="1.1" height="1.1"/><rect x="11" y="3.1" width="1.1" height="1.1"/><rect x="13.3" y="3.1" width="1.1" height="1.1"/><rect x="4.6" y="5.2" width="1.1" height="1.1"/><rect x="6.6" y="5.2" width="1.1" height="1.1"/><rect x="8.8" y="5.2" width="1.1" height="1.1"/><rect x="11" y="5.2" width="1.1" height="1.1"/><rect x="13" y="5.2" width="1" height="1.1"/></g><g fill="#3d8ee0"><circle cx="5.7" cy="12.1" r="1.1"/><circle cx="13.8" cy="12.1" r="1.1"/></g></svg>
<svg class="ic" style="left:378px;top:203px" width="15" height="15" viewBox="0 0 15 15"><defs></defs><circle cx="7.5" cy="7.5" r="7" fill="url(#ig)"/><rect x="7.2" y="3.2" width="2" height="1.8" fill="#3a68a6"/><rect x="7.2" y="6.2" width="2" height="5" fill="#3a68a6"/></svg>
<svg class="ic" style="left:422px;top:201px" width="16" height="17" viewBox="0 0 16 17"><path d="M5 9.8 C2 9.3 0.9 7.6 0.9 5.6 C0.9 3 3.6 1.6 7.6 1.6 C11.6 1.6 14.5 3 14.5 5.6 C14.5 8.1 11.8 9.7 9.2 9.9 L5.4 14.6 Z" fill="#fff" stroke="#1a1a1a" stroke-width="1.05"/><rect x="6.9" y="2.6" width="2.1" height="4.2" fill="#111"/><rect x="6.9" y="7.6" width="2.1" height="1.5" fill="#111"/></svg>
<svg class="ic" style="left:439px;top:203px" width="17" height="16" viewBox="0 0 17 16"><path d="M1 7 L8.8 7" stroke="#1c1c70" stroke-width="2"/><path d="M8.2 7.2 L13 2.4" stroke="#333" stroke-width="2"/><path d="M8.2 6.8 L13 11.6" stroke="#0a1a90" stroke-width="2"/><path d="M9.6 0.2 L16 0.2 L16 6.6 Z" fill="#333"/><path d="M9.6 14.6 L16 14.6 L16 8.2 Z" fill="#0010dd"/></svg>
<div class="t" style="left:486px;top:204px;color:#000;letter-spacing:0px">(2)</div>
<div class="t" style="left:521px;top:204px;color:#000;letter-spacing:0.15px">131437840</div>
<div class="t" style="left:595px;top:204px;color:#000;letter-spacing:0px">1</div>
<div class="t" style="left:629px;top:204px;color:#000;letter-spacing:0.15px">131437840</div>
<div class="t" style="left:714px;top:204px;color:#000;letter-spacing:0.45px">SHIM</div>
<svg class="ic" style="left:344px;top:224px" width="12" height="12" viewBox="0 0 12 12"><defs></defs><g transform="translate(6 6) rotate(22.5)" fill="url(#gg)"><circle r="3.7"/><rect x="-1.25" y="-5.1" width="2.5" height="10.2" rx=".5"/><rect x="-1.25" y="-5.1" width="2.5" height="10.2" rx=".5" transform="rotate(45)"/><rect x="-1.25" y="-5.1" width="2.5" height="10.2" rx=".5" transform="rotate(90)"/><rect x="-1.25" y="-5.1" width="2.5" height="10.2" rx=".5" transform="rotate(135)"/></g><circle cx="6" cy="6" r="1.6" fill="#fff"/></svg>
<svg class="ic" style="left:359px;top:223px" width="18" height="15" viewBox="0 0 18 15"><path d="M1 0.4 L3.9 2.2" stroke="#4a74aa" stroke-width="1.5" stroke-linecap="round"/><path d="M3.2 1.7 L17.2 1.7 L14.2 7.8 L3.7 7.8 Z" fill="#4a74aa"/><path d="M4.1 7.5 L4.6 10.4 M3.9 10.2 L16.2 10.2" stroke="#4a74aa" stroke-width="1.3"/><g fill="#fff"><rect x="4.3" y="3.1" width="1.1" height="1.1"/><rect x="6.6" y="3.1" width="1.1" height="1.1"/><rect x="8.8" y="3.1" width="1.1" height="1.1"/><rect x="11" y="3.1" width="1.1" height="1.1"/><rect x="13.3" y="3.1" width="1.1" height="1.1"/><rect x="4.6" y="5.2" width="1.1" height="1.1"/><rect x="6.6" y="5.2" width="1.1" height="1.1"/><rect x="8.8" y="5.2" width="1.1" height="1.1"/><rect x="11" y="5.2" width="1.1" height="1.1"/><rect x="13" y="5.2" width="1" height="1.1"/></g><g fill="#3d8ee0"><circle cx="5.7" cy="12.1" r="1.1"/><circle cx="13.8" cy="12.1" r="1.1"/></g></svg>
<svg class="ic" style="left:378px;top:223px" width="15" height="15" viewBox="0 0 15 15"><defs></defs><circle cx="7.5" cy="7.5" r="7" fill="url(#ig)"/><rect x="7.2" y="3.2" width="2" height="1.8" fill="#3a68a6"/><rect x="7.2" y="6.2" width="2" height="5" fill="#3a68a6"/></svg>
<div class="t" style="left:486px;top:224px;color:#000;letter-spacing:0px">3</div>
<div class="t" style="left:521px;top:224px;color:#000;letter-spacing:0.15px">011310620</div>
<div class="t" style="left:595px;top:224px;color:#000;letter-spacing:0px">2</div>
<div class="t" style="left:629px;top:224px;color:#000;letter-spacing:0.15px">011310620</div>
<div class="t" style="left:714px;top:224px;color:#000;letter-spacing:-0.6px">SCREW</div>
<svg class="ic" style="left:344px;top:244px" width="12" height="12" viewBox="0 0 12 12"><defs></defs><g transform="translate(6 6) rotate(22.5)" fill="url(#gg)"><circle r="3.7"/><rect x="-1.25" y="-5.1" width="2.5" height="10.2" rx=".5"/><rect x="-1.25" y="-5.1" width="2.5" height="10.2" rx=".5" transform="rotate(45)"/><rect x="-1.25" y="-5.1" width="2.5" height="10.2" rx=".5" transform="rotate(90)"/><rect x="-1.25" y="-5.1" width="2.5" height="10.2" rx=".5" transform="rotate(135)"/></g><circle cx="6" cy="6" r="1.6" fill="#fff"/></svg>
<svg class="ic" style="left:359px;top:243px" width="18" height="15" viewBox="0 0 18 15"><path d="M1 0.4 L3.9 2.2" stroke="#4a74aa" stroke-width="1.5" stroke-linecap="round"/><path d="M3.2 1.7 L17.2 1.7 L14.2 7.8 L3.7 7.8 Z" fill="#4a74aa"/><path d="M4.1 7.5 L4.6 10.4 M3.9 10.2 L16.2 10.2" stroke="#4a74aa" stroke-width="1.3"/><g fill="#fff"><rect x="4.3" y="3.1" width="1.1" height="1.1"/><rect x="6.6" y="3.1" width="1.1" height="1.1"/><rect x="8.8" y="3.1" width="1.1" height="1.1"/><rect x="11" y="3.1" width="1.1" height="1.1"/><rect x="13.3" y="3.1" width="1.1" height="1.1"/><rect x="4.6" y="5.2" width="1.1" height="1.1"/><rect x="6.6" y="5.2" width="1.1" height="1.1"/><rect x="8.8" y="5.2" width="1.1" height="1.1"/><rect x="11" y="5.2" width="1.1" height="1.1"/><rect x="13" y="5.2" width="1" height="1.1"/></g><g fill="#3d8ee0"><circle cx="5.7" cy="12.1" r="1.1"/><circle cx="13.8" cy="12.1" r="1.1"/></g></svg>
<svg class="ic" style="left:378px;top:243px" width="15" height="15" viewBox="0 0 15 15"><defs></defs><circle cx="7.5" cy="7.5" r="7" fill="url(#ig)"/><rect x="7.2" y="3.2" width="2" height="1.8" fill="#3a68a6"/><rect x="7.2" y="6.2" width="2" height="5" fill="#3a68a6"/></svg>
<div class="t" style="left:486px;top:244px;color:#000;letter-spacing:0px">4</div>
<div class="t" style="left:521px;top:244px;color:#000;letter-spacing:0.15px">023100006</div>
<div class="t" style="left:595px;top:244px;color:#000;letter-spacing:0px">2</div>
<div class="t" style="left:629px;top:244px;color:#000;letter-spacing:0.15px">023100006</div>
<div class="t" style="left:714px;top:244px;color:#000;letter-spacing:0px">NUT</div>
</body></html>
